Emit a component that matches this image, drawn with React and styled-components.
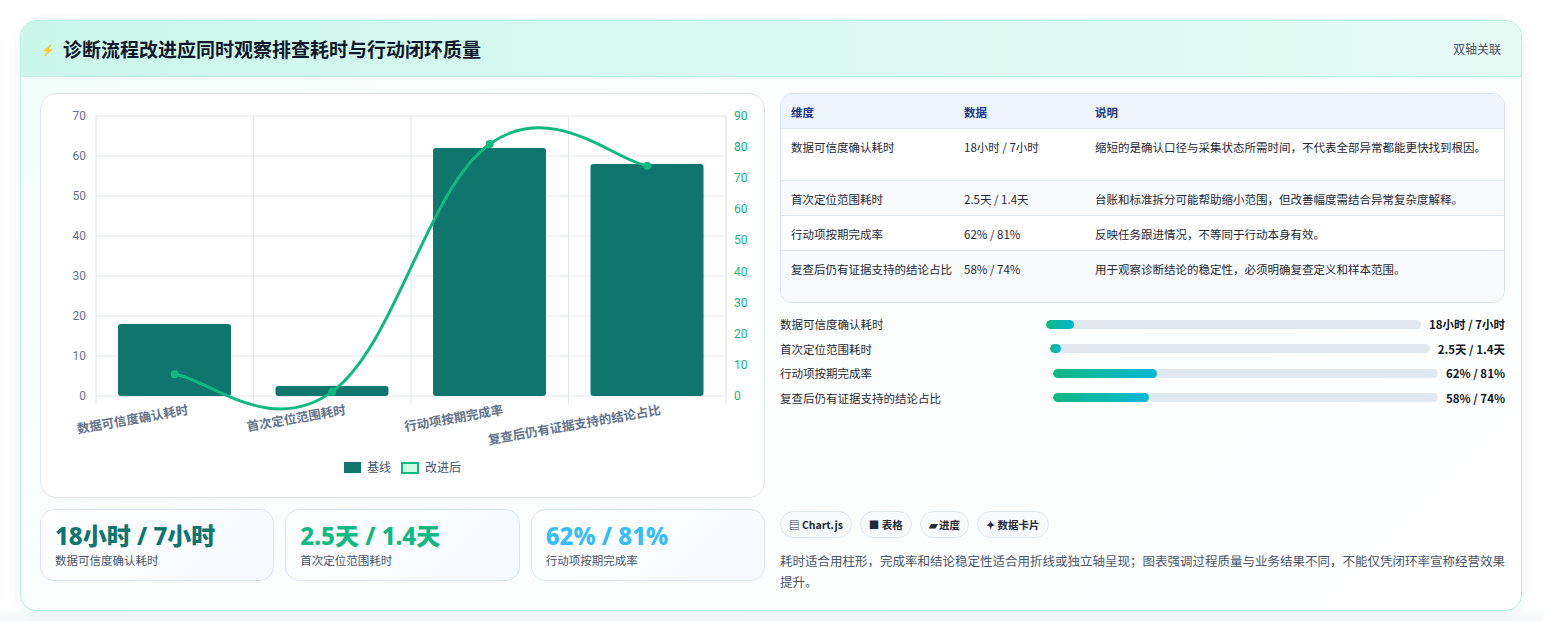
import React from "react";
import styled, { createGlobalStyle } from "styled-components";

const Global = createGlobalStyle`
  body { margin: 0; background: #f3f4f6; font-family: "Noto Sans CJK SC", "Noto Sans", sans-serif; }
`;

const Page = styled.div`
  padding: 20px 21px 22px 20px;
  background: linear-gradient(180deg, #ffffff 0%, #ffffff 96%, #eceff2 100%);
`;

const Card = styled.div`
  border: 1px solid #bfeee3;
  border-radius: 16px;
  background: linear-gradient(135deg, #f2fdf9 0%, #fbfefd 40%, #ffffff 100%);
  box-shadow: 0 4px 14px rgba(15, 118, 110, 0.08);
  overflow: hidden;
`;

const Header = styled.div`
  height: 55px;
  display: flex;
  align-items: center;
  justify-content: space-between;
  padding: 0 20px;
  background: linear-gradient(90deg, #cbf7ea 0%, #def9f1 60%, #e6faf4 100%);
  border-bottom: 1px solid #c6efe3;
`;

const Title = styled.h1`
  margin: 0;
  font-size: 19px;
  font-weight: 700;
  color: #0f172a;
  display: flex;
  align-items: center;
  gap: 8px;
`;

const Bolt = styled.span`
  color: #3b82f6;
  font-size: 11px;
`;

const HeaderTag = styled.span`
  font-size: 12px;
  color: #475569;
`;

const Body = styled.div`
  display: grid;
  grid-template-columns: 725px 725px;
  gap: 15px;
  padding: 16px 19px 18px 19px;
`;

const Col = styled.div`
  display: flex;
  flex-direction: column;
`;

const ChartBox = styled.div`
  height: 403px;
  background: #fff;
  border: 1px solid #e2e8f0;
  border-radius: 16px;
  position: relative;
`;

const Stats = styled.div`
  display: grid;
  grid-template-columns: repeat(3, 1fr);
  gap: 11px;
  margin-top: 11px;
`;

const Stat = styled.div`
  height: 72px;
  box-sizing: border-box;
  border: 1px solid #dbe6f3;
  border-radius: 14px;
  background: linear-gradient(135deg, #ffffff, #f5f9fd);
  padding: 12px 14px;
`;

const StatValue = styled.div`
  font-size: 24px;
  font-weight: 800;
  line-height: 28px;
  color: ${(p) => p.color};
  font-family: "Noto Sans", "Noto Sans CJK SC", sans-serif;
`;

const StatLabel = styled.div`
  font-size: 11.5px;
  color: #475569;
  margin-top: 2px;
`;

const Table = styled.div`
  border: 1px solid #dbe4ee;
  border-radius: 12px;
  overflow: hidden;
  background: #fff;
`;

const Row = styled.div`
  display: grid;
  grid-template-columns: 173px 131px 1fr;
  padding: 0 10px;
  min-height: ${(p) => p.h}px;
  align-items: start;
  padding-top: ${(p) => (p.head ? 9 : 9)}px;
  box-sizing: border-box;
  background: ${(p) => (p.head ? "#eef5fd" : p.alt ? "#f8fafc" : "#ffffff")};
  border-top: ${(p) => (p.first ? "none" : "1px solid #e2e8f0")};
  font-size: 11.5px;
  line-height: 18px;
  color: ${(p) => (p.head ? "#1e3a8a" : "#1f2937")};
  font-weight: ${(p) => (p.head ? 600 : 400)};
`;

const Bars = styled.div`
  display: flex;
  flex-direction: column;
  gap: 6px;
  margin-top: 12px;
`;

const BarRow = styled.div`
  display: flex;
  align-items: center;
  gap: 8px;
  height: 18.5px;
  font-size: 11.5px;
  color: #1f2937;
`;

const BarLabel = styled.span`
  width: ${(p) => p.w}px;
  flex-shrink: 0;
`;

const Track = styled.div`
  flex: 1;
  height: 9px;
  background: #e2e8f0;
  border-radius: 5px;
  overflow: hidden;
`;

const Fill = styled.div`
  height: 100%;
  border-radius: 5px;
  background: linear-gradient(90deg, #10b981, #06b6d4);
`;

const BarValue = styled.span`
  font-weight: 700;
  color: #111827;
`;

const Tags = styled.div`
  display: flex;
  gap: 8px;
  margin-top: 104px;
`;

const Tag = styled.span`
  font-size: 10.5px;
  font-weight: 600;
  color: #1f2937;
  border: 1px solid #e2e8f0;
  background: #f8fafc;
  border-radius: 14px;
  padding: 5px 8px;
`;

const Note = styled.p`
  margin: 12px 0 0;
  font-size: 12.5px;
  line-height: 21px;
  color: #475569;
`;

const cats = ["数据可信度确认耗时", "首次定位范围耗时", "行动项按期完成率", "复查后仍有证据支持的结论占比"];
const base = [18, 2.5, 62, 58];
const after = [7, 1.4, 81, 74];

function Chart() {
  const L = 55, R = 685, T = 22, B = 302;
  const cw = (R - L) / 4;
  const yl = (v) => B - (v / 70) * (B - T);
  const yr = (v) => B - (v / 90) * (B - T);
  const pts = after.map((v, i) => [L + cw * (i + 0.5), yr(v)]);
  let d = `M${pts[0][0]},${pts[0][1]}`;
  for (let i = 0; i < pts.length - 1; i++) {
    const p0 = pts[i - 1] || pts[i], p1 = pts[i], p2 = pts[i + 1], p3 = pts[i + 2] || p2;
    const t = 0.4 / 2;
    const c1 = [p1[0] + (p2[0] - p0[0]) * t, p1[1] + (p2[1] - p0[1]) * t];
    const c2 = [p2[0] - (p3[0] - p1[0]) * t, p2[1] - (p3[1] - p1[1]) * t];
    d += ` C${c1[0]},${c1[1]} ${c2[0]},${c2[1]} ${p2[0]},${p2[1]}`;
  }
  return (
    <svg width="725" height="403" style={{ fontFamily: "Roboto, 'Noto Sans CJK SC', sans-serif" }}>
      {[0, 10, 20, 30, 40, 50, 60, 70].map((v) => (
        <g key={v}>
          <line x1={L} x2={R} y1={yl(v)} y2={yl(v)} stroke="#e5e7eb" />
          <text x={L - 10} y={yl(v) + 4} fontSize="12" fill="#64748b" textAnchor="end">{v}</text>
        </g>
      ))}
      {[0, 10, 20, 30, 40, 50, 60, 70, 80, 90].map((v) => (
        <text key={v} x={R + 8} y={yr(v) + 4} fontSize="12" fill="#10b981">{v}</text>
      ))}
      {[0, 1, 2, 3, 4].map((i) => (
        <line key={i} x1={L + cw * i} x2={L + cw * i} y1={T} y2={B + 8} stroke="#e5e7eb" />
      ))}
      <line x1={R} x2={R} y1={T} y2={B} stroke="#e5e7eb" />
      {base.map((v, i) => (
        <rect key={i} x={L + cw * i + 22} y={yl(v)} width={113} height={B - yl(v)} rx="3" fill="#0f766e" />
      ))}
      <path d={d} fill="none" stroke="#10b981" strokeWidth="3" />
      {pts.map((p, i) => (
        <circle key={i} cx={p[0]} cy={p[1]} r="4" fill="#10b981" />
      ))}
      {cats.map((c, i) => (
        <text key={c} x={L + cw * (i + 0.5) + 14} y={B + 18} fontSize="12.5" fontWeight="600" fill="#64748b" textAnchor="end" transform={`rotate(-10 ${L + cw * (i + 0.5) + 14} ${B + 18})`}>{c}</text>
      ))}
      <rect x="303" y="368" width="17" height="11" fill="#0f766e" />
      <text x="326" y="378" fontSize="12" fill="#475569">基线</text>
      <rect x="361" y="369" width="16" height="10" fill="#d1fae5" stroke="#10b981" strokeWidth="2" />
      <text x="384" y="378" fontSize="12" fill="#475569">改进后</text>
    </svg>
  );
}

const rows = [
  ["数据可信度确认耗时", "18小时 / 7小时", "缩短的是确认口径与采集状态所需时间，不代表全部异常都能更快找到根因。", 52],
  ["首次定位范围耗时", "2.5天 / 1.4天", "台账和标准拆分可能帮助缩小范围，但改善幅度需结合异常复杂度解释。", 35],
  ["行动项按期完成率", "62% / 81%", "反映任务跟进情况，不等同于行动本身有效。", 35],
  ["复查后仍有证据支持的结论占比", "58% / 74%", "用于观察诊断结论的稳定性，必须明确复查定义和样本范围。", 52],
];

const bars = [
  ["数据可信度确认耗时", 258, 7.5, "18小时 / 7小时"],
  ["首次定位范围耗时", 262, 3, "2.5天 / 1.4天"],
  ["行动项按期完成率", 265, 27, "62% / 81%"],
  ["复查后仍有证据支持的结论占比", 265, 25, "58% / 74%"],
];

export default function App() {
  return (
    <Page>
      <Global />
      <Card>
        <Header>
          <Title><Bolt>⚡</Bolt>诊断流程改进应同时观察排查耗时与行动闭环质量</Title>
          <HeaderTag>双轴关联</HeaderTag>
        </Header>
        <Body>
          <Col>
            <ChartBox><Chart /></ChartBox>
            <Stats>
              <Stat><StatValue color="#0f766e">18小时 / 7小时</StatValue><StatLabel>数据可信度确认耗时</StatLabel></Stat>
              <Stat><StatValue color="#10b981">2.5天 / 1.4天</StatValue><StatLabel>首次定位范围耗时</StatLabel></Stat>
              <Stat><StatValue color="#38bdf8">62% / 81%</StatValue><StatLabel>行动项按期完成率</StatLabel></Stat>
            </Stats>
          </Col>
          <Col>
            <Table>
              <Row head first h={34}><span>维度</span><span>数据</span><span>说明</span></Row>
              {rows.map((r, i) => (
                <Row key={r[0]} alt={i % 2 === 1} h={r[3]}><span>{r[0]}</span><span>{r[1]}</span><span>{r[2]}</span></Row>
              ))}
            </Table>
            <Bars>
              {bars.map((b) => (
                <BarRow key={b[0]}>
                  <BarLabel w={b[1]}>{b[0]}</BarLabel>
                  <Track><Fill style={{ width: `${b[2]}%` }} /></Track>
                  <BarValue>{b[3]}</BarValue>
                </BarRow>
              ))}
            </Bars>
            <Tags>
              <Tag>▤ Chart.js</Tag>
              <Tag>■ 表格</Tag>
              <Tag>▰ 进度</Tag>
              <Tag>✦ 数据卡片</Tag>
            </Tags>
            <Note>耗时适合用柱形，完成率和结论稳定性适合用折线或独立轴呈现；图表强调过程质量与业务结果不同，不能仅凭闭环率宣称经营效果提升。</Note>
          </Col>
        </Body>
      </Card>
    </Page>
  );
}
